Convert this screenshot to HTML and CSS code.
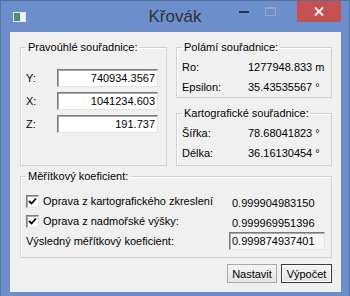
FILE: index.html
```html
<!DOCTYPE html>
<html lang="cs">
<head>
    <meta charset="UTF-8">
    <title>Křovák</title>
    <link rel="stylesheet" href="styles.css">
</head>
<body>
    <div class="window">
        <div class="titlebar">
            <svg class="app-icon" width="13" height="10" viewBox="0 0 13 10">
                <rect x="0" y="0" width="13" height="10" fill="#dfe6ee"/>
                <rect x="1" y="1" width="6" height="8" fill="#4f8f7a"/>
                <rect x="8" y="1" width="4" height="8" fill="#f4f6f8"/>
            </svg>
            <div class="title">Křovák</div>
            <div class="controls">
                <span class="ctl">
                    <svg width="10" height="2"><rect width="10" height="2" fill="#2e3440"/></svg>
                </span>
                <span class="ctl">
                    <svg width="11" height="9"><rect x="0.5" y="0.5" width="10" height="8" fill="none" stroke="#98a6c3"/><rect x="0" y="0" width="11" height="2" fill="#98a6c3"/></svg>
                </span>
                <span class="ctl close">
                    <svg width="10" height="9" viewBox="0 0 10 9"><path d="M1 0.5 L9 8.5 M9 0.5 L1 8.5" stroke="#fff" stroke-width="1.8"/></svg>
                </span>
            </div>
        </div>

        <div class="client">
            <div class="top">
                <fieldset class="group rect">
                    <legend>Pravoúhlé souřadnice:</legend>
                    <div class="field-row"><label>Y:</label><input class="edit" type="text" value="740934.3567"></div>
                    <div class="field-row"><label>X:</label><input class="edit" type="text" value="1041234.603"></div>
                    <div class="field-row"><label>Z:</label><input class="edit" type="text" value="191.737"></div>
                </fieldset>

                <div class="right-col">
                    <fieldset class="group polar">
                        <legend>Polámí souřadnice:</legend>
                        <div class="value-row"><span>Ro:</span><span>1277948.833 m</span></div>
                        <div class="value-row"><span>Epsilon:</span><span>35.43535567 °</span></div>
                    </fieldset>
                    <fieldset class="group carto">
                        <legend>Kartografické souřadnice:</legend>
                        <div class="value-row"><span>Šířka:</span><span>78.68041823 °</span></div>
                        <div class="value-row"><span>Délka:</span><span>36.16130454 °</span></div>
                    </fieldset>
                </div>
            </div>

            <fieldset class="group scale">
                <legend>Měřítkový koeficient:</legend>
                <div class="scale-row">
                    <label class="check-label">
                        <span class="check"><svg width="9" height="9" viewBox="0 0 9 9"><path d="M1 4 L3.5 6.5 L8 1.5" fill="none" stroke="#000" stroke-width="1.8"/></svg></span>
                        Oprava z kartografického zkreslení
                    </label>
                    <span class="scale-value">0.999904983150</span>
                </div>
                <div class="scale-row">
                    <label class="check-label">
                        <span class="check"><svg width="9" height="9" viewBox="0 0 9 9"><path d="M1 4 L3.5 6.5 L8 1.5" fill="none" stroke="#000" stroke-width="1.8"/></svg></span>
                        Oprava z nadmořské výšky:
                    </label>
                    <span class="scale-value">0.999969951396</span>
                </div>
                <div class="scale-row result-row">
                    <span>Výsledný měřítkový koeficient:</span>
                    <span class="result">0.999874937401</span>
                </div>
            </fieldset>

            <div class="buttons">
                <button class="btn btn-set">Nastavit</button>
                <button class="btn btn-calc">Výpočet</button>
            </div>
        </div>
    </div>
</body>
</html>
```

FILE: styles.css
```css
body {
    margin: 0;
    font-family: "Liberation Sans", Arial, sans-serif;
    font-size: 11px;
    color: #000;
    background: #fff;
}

.window {
    width: 350px;
    height: 296px;
    box-sizing: border-box;
    background: #6c8ecb;
    border: 1px solid #55729f;
    border-bottom: none;
    display: flex;
    flex-direction: column;
}

.titlebar {
    height: 31px;
    flex: none;
    display: grid;
    grid-template-columns: 1fr auto 1fr;
    align-items: start;
}

.app-icon {
    margin: 11px 0 0 12px;
}

.title {
    font-size: 17px;
    line-height: 31px;
    color: #2f3238;
}

.controls {
    justify-self: end;
    display: flex;
    margin-right: 8px;
}

.ctl {
    width: 26px;
    height: 21px;
    display: flex;
    align-items: center;
    justify-content: center;
}

.ctl.close {
    width: 44px;
    margin-left: 14px;
    background: #c75050;
}

.client {
    height: 260px;
    flex: none;
    margin: 0 8px 0 9px;
    box-sizing: border-box;
    padding: 8px 9px 0 10px;
    background: #f0f0f0;
}

.top {
    display: grid;
    grid-template-columns: 147px 156px;
    column-gap: 9px;
}

.group {
    margin: 0;
    padding: 0 5px;
    min-width: 0;
    border: 1px solid #d2d2d2;
    box-shadow: inset 1px 1px 0 #fff;
}

.group legend {
    padding: 0 2px;
    line-height: 14px;
}

.rect {
    padding-top: 15px;
    display: flex;
    flex-direction: column;
    gap: 5px;
}

.field-row {
    display: flex;
    align-items: center;
    height: 18px;
}

.field-row label {
    width: 31px;
}

.edit {
    box-sizing: border-box;
    width: 101px;
    height: 18px;
    margin: 0;
    padding: 0 2px;
    font: inherit;
    text-align: right;
    background: #fff;
    border: 1px solid;
    border-color: #7a7a7a #e3e3e3 #e3e3e3 #7a7a7a;
    box-shadow: inset 1px 1px 0 #a9a9a9;
    outline: none;
}

.right-col {
    display: flex;
    flex-direction: column;
    gap: 8px;
}

.polar {
    padding-top: 3px;
}

.carto {
    padding-top: 3px;
    padding-bottom: 2px;
}

.value-row {
    display: grid;
    grid-template-columns: 66px auto;
    align-items: center;
    height: 20px;
}

.scale {
    margin-top: 3px;
    padding-top: 8px;
    padding-bottom: 7px;
}

.scale-row {
    display: grid;
    grid-template-columns: 203px 96px;
    align-items: center;
    height: 20px;
}

.scale-row.result-row {
    height: 18px;
    margin-top: 1px;
}

.check-label {
    display: flex;
    align-items: center;
    gap: 4px;
}

.check {
    width: 13px;
    height: 13px;
    box-sizing: border-box;
    display: flex;
    align-items: center;
    justify-content: center;
    background: #fff;
    border: 1px solid;
    border-color: #7a7a7a #e3e3e3 #e3e3e3 #7a7a7a;
    box-shadow: inset 1px 1px 0 #a9a9a9;
}

.scale-value {
    padding: 3px 0 0 3px;
}

.result {
    box-sizing: border-box;
    height: 18px;
    line-height: 16px;
    padding-left: 2px;
    background: #f7f7f7;
    border: 1px solid;
    border-color: #7a7a7a #e3e3e3 #e3e3e3 #7a7a7a;
    box-shadow: inset 1px 1px 0 #a9a9a9;
}

.buttons {
    display: flex;
    justify-content: flex-end;
    gap: 4px;
    margin-top: 6px;
}

.btn {
    height: 19px;
    margin: 0;
    padding: 0;
    font: inherit;
    color: #000;
    background: linear-gradient(#f4f4f4, #e4e4e4);
    border: 1px solid #a9a9a9;
    border-radius: 0;
}

.btn-set {
    width: 50px;
}

.btn-calc {
    width: 51px;
    border-color: #3c3c3c;
    box-shadow: inset 0 0 0 1px #fdfdfd;
}
```
